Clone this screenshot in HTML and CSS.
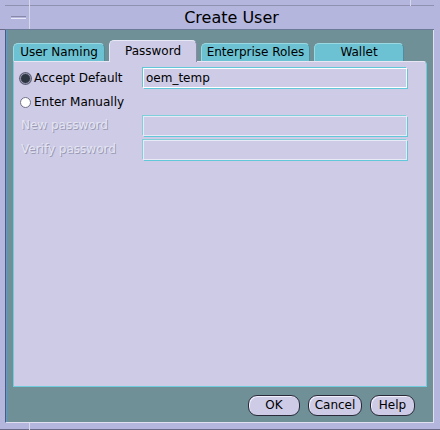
FILE: index.html
```html
<!DOCTYPE html>
<html>
<head>
<meta charset="utf-8">
<link rel="stylesheet" href="styles.css">
</head>
<body>
<div class="window">
  <span class="handle handle-tl-v"></span>
  <span class="handle handle-tr-v"></span>
  <span class="handle handle-bl-h"></span>
  <span class="handle handle-br-v"></span>
  <div class="titlebar">
    <div class="min-btn"><span class="min-glyph"></span></div>
    <div class="title">Create User</div>
  </div>
  <div class="content">
    <div class="tabs">
      <div class="tab tab-naming">User Naming</div>
      <div class="tab tab-password active">Password</div>
      <div class="tab tab-roles">Enterprise Roles</div>
      <div class="tab tab-wallet">Wallet</div>
    </div>
    <div class="panel">
      <div class="form">
        <label class="radio-label"><span class="radio checked"></span>Accept Default</label>
        <div class="field">oem_temp</div>
        <label class="radio-label"><span class="radio"></span>Enter Manually</label>
        <div></div>
        <div class="disabled-label">New password</div>
        <div class="field disabled"></div>
        <div class="disabled-label">Verify password</div>
        <div class="field disabled"></div>
      </div>
    </div>
    <div class="buttons">
      <div class="btn btn-ok">OK</div>
      <div class="btn btn-cancel">Cancel</div>
      <div class="btn btn-help">Help</div>
    </div>
  </div>
</div>
</body>
</html>
```

FILE: styles.css
```css
html, body {
  margin: 0;
  padding: 0;
}
body {
  width: 440px;
  height: 430px;
  background: #b4b6de;
  font-family: "DejaVu Sans", sans-serif;
  font-size: 12px;
  color: #000;
  overflow: hidden;
}
.window {
  position: relative;
  box-sizing: border-box;
  width: 440px;
  height: 430px;
  padding: 5px 6px 6px 5px;
  display: flex;
  flex-direction: column;
  border-bottom: 1px solid #6a6a88;
}
.handle {
  position: absolute;
  background: #d8d8ec;
}
.handle-tl-v { left: 29px; top: 0; width: 1px; height: 29px; }
.handle-tr-v { left: 410px; top: 0; width: 1px; height: 6px; }
.handle-bl-h { left: 0; top: 29px; width: 5px; height: 1px; background: #6a6a88; }
.handle-br-v { left: 29px; top: 423px; width: 1px; height: 7px; }
.titlebar {
  box-sizing: border-box;
  height: 25px;
  display: flex;
  border-top: 1px solid #9090b0;
  border-bottom: 1px solid #6a7a98;
}
.min-btn {
  width: 24px;
  display: flex;
  align-items: center;
  justify-content: center;
}
.min-glyph {
  display: block;
  width: 15px;
  height: 1px;
  border-top: 1px solid #8888a8;
  border-bottom: 1px solid #e8e8f8;
  margin-left: 2px;
}
.title {
  flex: 1;
  text-align: center;
  font-size: 16px;
  line-height: 23px;
  color: #000;
}
.content {
  flex: 1;
  background: #6f9096;
  border-left: 1px solid #4a5a80;
  box-shadow: inset 1px 0 0 #5a9ad0;
  border-right: 1px solid #e0e0f0;
  border-bottom: 1px solid #e0e0f0;
  padding: 10px 5px 0 7px;
  display: flex;
  flex-direction: column;
}
.tabs {
  display: flex;
  align-items: flex-end;
  gap: 4px;
  height: 21px;
  position: relative;
  z-index: 1;
}
.tab {
  box-sizing: border-box;
  height: 18px;
  line-height: 17px;
  text-align: center;
  background: #6cc2d2;
  border: 1px solid #4f8e9c;
  border-top-color: #9ad8e2;
  border-left-color: #9ad8e2;
  border-bottom: none;
  border-radius: 5px 5px 0 0;
  white-space: nowrap;
}
.tab-naming { width: 92px; }
.tab-password { width: 88px; }
.tab-roles { width: 109px; }
.tab-wallet { width: 90px; }
.tab.active {
  height: 22px;
  line-height: 21px;
  background: #cdcbe6;
  border-color: #e8e8f6;
  border-right-color: #8a8aa8;
  margin-bottom: -1px;
}
.panel {
  box-sizing: border-box;
  width: 414px;
  height: 326px;
  background: #cdcbe6;
  border: 1px solid #70ccdc;
  border-top-color: #e6e6f4;
  border-radius: 0 4px 0 0;
  padding: 6px 19px 0 6px;
}
.form {
  display: grid;
  grid-template-columns: 123px 1fr;
  grid-auto-rows: 20px;
  row-gap: 4px;
}
.radio-label {
  display: flex;
  align-items: center;
  gap: 3px;
  white-space: nowrap;
}
.radio {
  box-sizing: border-box;
  width: 11px;
  height: 11px;
  border-radius: 50%;
  background: #ffffff;
  border: 1px solid #707088;
}
.radio.checked {
  background: #2e3644;
  border: 1px solid #9a9ab0;
  box-shadow: 0 0 0 1px #60607a;
}
.disabled-label {
  display: flex;
  align-items: center;
  padding-left: 1px;
  padding-bottom: 3px;
  color: #e4e4f2;
  text-shadow: 1px 1px 0 #9a9ab4;
  white-space: nowrap;
}
.field {
  box-sizing: border-box;
  height: 20px;
  border: 1px solid #ffffff;
  box-shadow: 1px 1px 0 #60c8d8, -1px -1px 0 #60c8d8;
  padding-left: 2px;
  line-height: 18px;
  background: #cdcbe6;
}
.field.disabled {
  border-color: #e8eaf6;
  box-shadow: 1px 1px 0 #60c8d8, -1px -1px 0 #80d0dc;
}
.buttons {
  display: flex;
  justify-content: flex-end;
  gap: 8px;
  margin-top: 8px;
  padding-right: 13px;
}
.btn {
  box-sizing: border-box;
  height: 21px;
  line-height: 19px;
  text-align: center;
  background: #cdcbe6;
  border: 1px solid #2a2a3a;
  border-radius: 9px;
  box-shadow: inset 1px 1px 0 #f0f0fc;
}
.btn-ok { width: 52px; }
.btn-cancel { width: 54px; }
.btn-help { width: 45px; }
```
